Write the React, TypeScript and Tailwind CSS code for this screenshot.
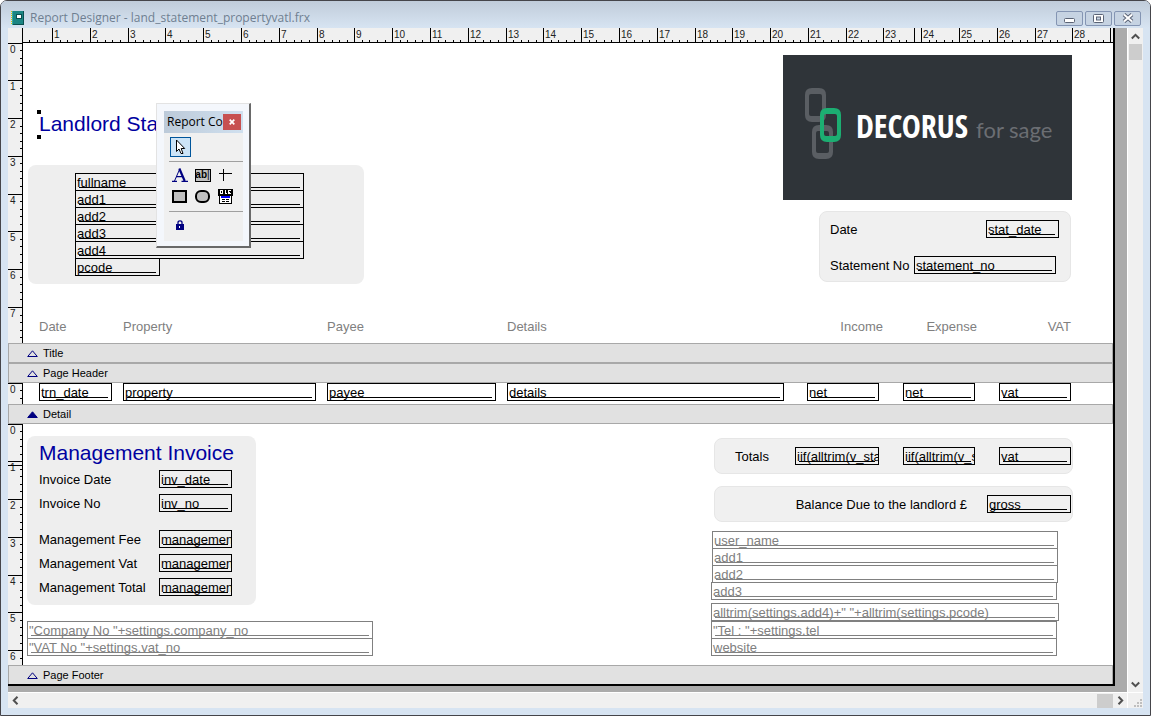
import type { ReactNode } from 'react';

const CM = 37.795;
const STEP = CM / 5;

interface FieldProps {
  children: ReactNode;
  className?: string;
}

function Field({ children, className = '' }: FieldProps) {
  return (
    <div
      className={`relative h-[18px] shrink-0 overflow-hidden border border-current pl-px text-[13px] leading-[18px] whitespace-nowrap ${className}`}
    >
      {children}
      <span className="absolute right-[3px] bottom-[2px] left-[3px] border-b border-current" />
    </div>
  );
}

function HorizontalRuler() {
  // the paper is 29 cm wide
  const ticks = Array.from({ length: 144 }, (_, i) => i + 2);
  return (
    <div className="flex h-[15px] bg-[#f0f0f0]">
      <div className="w-[15px] shrink-0 border-r border-black" />
      <div className="min-w-0 flex-1 border-b border-black">
        <svg className="block h-[14px] w-full" shapeRendering="crispEdges">
          {ticks.map((i) => {
            const x = Math.round(i * STEP - 8.8);
            const major = i % 5 === 0;
            return (
              <g key={i}>
                <rect x={x} y={major ? 0 : 12} width={1} height={major ? 14 : 2} fill="#000" />
                {major && i < 145 && (
                  <text x={x + 2} y={10} fontSize={10} fill="#222">
                    {i / 5}
                  </text>
                )}
              </g>
            );
          })}
          {/* pointer position marker */}
          <rect x={891} y={0} width={1} height={12} fill="#000" />
        </svg>
      </div>
    </div>
  );
}

function VerticalRuler({ height, marker }: { height: number; marker?: number }) {
  const ticks = Array.from({ length: Math.ceil(height / STEP) }, (_, i) => i);
  return (
    <div className="w-[15px] shrink-0 border-r border-black bg-[#f0f0f0]">
      <svg className="block" width={14} height={height} shapeRendering="crispEdges">
        {ticks.map((i) => {
          const y = Math.max(0, Math.round(i * STEP - 0.6));
          const major = i % 5 === 0;
          return (
            <g key={i}>
              <rect x={major ? 0 : 12} y={y} width={major ? 14 : 2} height={1} fill="#000" />
              {major && (
                <text x={2} y={y + 10} fontSize={10} fill="#222">
                  {i / 5}
                </text>
              )}
            </g>
          );
        })}
        {marker && <rect x={0} y={marker} width={14} height={1} fill="#000" />}
      </svg>
    </div>
  );
}

function BandBar({ name, active, last }: { name: string; active?: boolean; last?: boolean }) {
  return (
    <div
      className={`flex items-center gap-[5px] border-[#a8a8a8] bg-[#e1e1e1] pl-[18px] text-[11px] leading-none ${
        last ? 'h-[19px] border-t border-r border-l' : 'h-5 border'
      }`}
    >
      <svg width="11" height="7" viewBox="0 0 11 7">
        <path
          d="M5.5 .8 L10.3 6.5 H.7 Z"
          fill={active ? '#000080' : 'none'}
          stroke="#000080"
          strokeWidth="1"
        />
      </svg>
      <span>{name}</span>
    </div>
  );
}

const link =
  'M7 0H14Q21 0 21 7V27Q21 34 14 34H7Q0 34 0 27V7Q0 0 7 0Z M6 6Q4 6 4 8V26Q4 28 6 28H15Q17 28 17 26V8Q17 6 15 6Z';

function Logo() {
  return (
    <div className="flex h-[145px] w-[289px] items-start bg-[#2f3439] pt-[33px] pl-[22px]">
      <svg width="36" height="71" viewBox="0 0 36 71" fillRule="evenodd">
        <path d={link} fill="#5a5e63" />
        <path d={link} fill="#5a5e63" transform="translate(7 37)" />
        <path d={link} fill="#1cae72" transform="translate(15 20)" />
      </svg>
      <div className="mt-[18px] flex flex-1 items-baseline gap-2 pl-[15px] leading-10 whitespace-nowrap">
        <span className="font-['Liberation_Sans_Narrow','Open_Sans_Condensed','Open_Sans',sans-serif] text-[32px] font-bold text-white">
          DECORUS
        </span>
        <span className="font-['Lato',sans-serif] text-[22px] text-[#6b6e73]">for sage</span>
      </div>
    </div>
  );
}

function ControlsPalette() {
  return (
    <div className="absolute top-[60px] left-[133px] w-[95px] border-t border-r-2 border-b-2 border-l border-t-[#e3e3e3] border-r-[#696969] border-b-[#696969] border-l-[#e3e3e3] bg-[#f4f7fc] pt-[7px] pr-[6px] pb-[5px] pl-[7px]">
      <div className="flex h-[130px] flex-col bg-[#f0f0f0]">
        <div className="flex h-[22px] items-center justify-between bg-linear-to-r from-[#bccad9] to-[#d0e0ef] pr-[3px] pl-[3px]">
          <span className="font-['Open_Sans',sans-serif] text-[12px] whitespace-nowrap text-black">Report Co</span>
          <button
            type="button"
            aria-label="Close toolbar"
            className="flex h-4 w-[18px] shrink-0 items-center justify-center bg-[#c75050]"
          >
            <svg width="6" height="6" viewBox="0 0 6 6">
              <path d="M.7 .7 L5.3 5.3 M5.3 .7 L.7 5.3" stroke="#fff" strokeWidth="1.7" />
            </svg>
          </button>
        </div>

        <div className="py-1 pl-[6px]">
          <button
            type="button"
            aria-label="Select objects"
            className="flex h-5 w-[21px] items-center justify-center border border-[#00559b] bg-[#cce4f7]"
          >
            <svg width="11" height="16" viewBox="0 0 11 16">
              <path
                d="M1.5 1 V12.5 L4 10 L6 14.5 H8 L6.2 9.5 H9.7 Z"
                fill="#fff"
                stroke="#000"
                strokeWidth="1"
              />
            </svg>
          </button>
        </div>

        <div className="ml-[5px] border-t border-[#a0a0a0]" />

        <div className="grid grid-cols-[23px_23px_23px] gap-y-[3px] pt-1 pb-[6px] pl-1">
          <button type="button" aria-label="Label" className="flex h-[18px] items-center justify-center">
            <svg width="16" height="14" viewBox="0 0 16 14" fill="none" stroke="#000080">
              <path d="M2.5 13 L7.5 1.5" strokeWidth="1" />
              <path d="M7.3 .5 L12.7 13" strokeWidth="2.2" />
              <path d="M4 8.7 H10.5 M0 13.3 H5 M9.5 13.3 H16" strokeWidth="1.2" />
            </svg>
          </button>
          <button type="button" aria-label="Field" className="flex h-[18px] items-center justify-center">
            <span className="flex h-[13px] w-4 items-center justify-center border border-black bg-[#c0c0c0] text-[10px] leading-none font-bold">
              ab<span className="font-normal">|</span>
            </span>
          </button>
          <button type="button" aria-label="Line" className="flex h-[18px] items-center justify-center">
            <svg width="13" height="12" viewBox="0 0 13 12" shapeRendering="crispEdges">
              <path d="M0 4.5 H13 M4.5 0 V12" stroke="#000" />
            </svg>
          </button>
          <button type="button" aria-label="Rectangle" className="flex h-[18px] items-center justify-center">
            <svg width="15" height="13" viewBox="0 0 15 13">
              <rect x="1" y="1" width="13" height="11" fill="#c0c0c0" stroke="#000" strokeWidth="2" />
            </svg>
          </button>
          <button type="button" aria-label="Rounded rectangle" className="flex h-[18px] items-center justify-center">
            <svg width="15" height="13" viewBox="0 0 15 13">
              <rect x="1" y="1" width="13" height="11" rx="5" fill="#c0c0c0" stroke="#000" strokeWidth="2" />
            </svg>
          </button>
          <button type="button" aria-label="OLE bound control" className="flex h-[18px] items-center justify-center">
            <svg width="15" height="15" viewBox="0 0 15 15" shapeRendering="crispEdges">
              <rect width="15" height="7" fill="#000" />
              <path
                d="M2.5 1.5 H4.5 V4.5 H2.5 Z M7.5 1 V4.5 H9 M13 1.5 H10.5 V4.5 H13 M10.5 3.5 H12"
                fill="none"
                stroke="#fff"
              />
              <rect x="1.5" y="6.5" width="12" height="8" fill="#fff" stroke="#000" />
              <rect x="3" y="7" width="9" height="2" fill="#0000ff" />
              <path d="M4 10.5 H7 M8 10.5 H11 M4 12.5 H7 M8 12.5 H11" stroke="#000" />
            </svg>
          </button>
        </div>

        <div className="ml-[5px] border-t border-[#a0a0a0]" />

        <div className="flex pt-2 pl-[12px]">
          <button type="button" aria-label="Button lock" className="block">
            <svg width="8" height="10" viewBox="0 0 8 10">
              <path d="M2 5 V2.5 Q2 .8 4 .8 Q6 .8 6 2.5 V5" fill="none" stroke="#000080" strokeWidth="1.3" />
              <rect x="0" y="4" width="8" height="6" fill="#000080" />
              <rect x="3" y="6" width="1" height="2" fill="#fff" />
            </svg>
          </button>
        </div>
      </div>
    </div>
  );
}

function Chevron({ d }: { d: string }) {
  return (
    <svg width="9" height="9" viewBox="0 0 9 9">
      <path d={d} fill="none" stroke="#505050" strokeWidth="2" />
    </svg>
  );
}

function TitleBar() {
  const button =
    'flex h-[15px] w-[27px] items-center justify-center rounded-[2px] border border-[#8495b3] bg-[#c6d3e2]';
  return (
    <header className="flex h-[27px] items-center justify-between rounded-t-[5px] bg-linear-to-b from-[#c0ccda] to-[#d7e4f2] pt-[7px] pr-[9px] pl-[9px]">
      <div className="flex items-center gap-[6px]">
        <svg width="14" height="14" viewBox="0 0 14 14" shapeRendering="crispEdges">
          <rect x="2" y="0" width="12" height="14" fill="#0b4f50" />
          <rect x="2" y="0" width="11" height="13" fill="#1b8583" />
          <rect x="2" y="0" width="1" height="14" fill="#35a9a4" />
          <rect x="6" y="3" width="5" height="4" fill="#fff" stroke="#0b4f50" />
          <path d="M1.5 0 V14" stroke="#d8c800" strokeWidth="1" strokeDasharray="1 1" />
        </svg>
        <h1 className="font-['Open_Sans',sans-serif] text-[12px] leading-4 text-[#6f7f91]">
          Report Designer - land_statement_propertyvatl.frx
        </h1>
      </div>
      <div className="flex gap-[2px]">
        <button type="button" aria-label="Minimize" className={button}>
          <svg width="13" height="9" viewBox="0 0 13 9">
            <rect x="1.5" y="4.5" width="10" height="4" rx="1" fill="#fff" stroke="#5a6375" />
          </svg>
        </button>
        <button type="button" aria-label="Maximize" className={button}>
          <svg width="11" height="9" viewBox="0 0 11 9">
            <rect x=".5" y=".5" width="10" height="8" rx="1" fill="#fff" stroke="#5a6375" />
            <rect x="3.5" y="3" width="4" height="3" fill="#c6d3e2" stroke="#5a6375" />
          </svg>
        </button>
        <button type="button" aria-label="Close" className={button}>
          <svg width="12" height="10" viewBox="0 0 12 10">
            <path d="M2 1.5 L10 8.5 M10 1.5 L2 8.5" stroke="#5a6375" strokeWidth="4" />
            <path d="M2 1.5 L10 8.5 M10 1.5 L2 8.5" stroke="#fff" strokeWidth="2" />
          </svg>
        </button>
      </div>
    </header>
  );
}

const columns = 'grid grid-cols-[84px_204px_180px_1fr_96px_96px_72px] pr-[42px] pl-4';

function TitleBand() {
  return (
    <section className="flex">
      <VerticalRuler height={300} />
      <div className="relative min-w-0 flex-1">
        <div className="flex justify-between pr-[41px] pl-[5px]">
          <div className="pt-[69px]">
            <div className="relative ml-[11px] h-6 w-[117px]">
              <h2 className="text-[21px] leading-6 whitespace-nowrap text-[#0000a0]">Landlord Sta</h2>
              <span className="absolute -top-[2px] -left-[2px] size-1 bg-black" />
              <span className="absolute -bottom-[3px] -left-[2px] size-1 bg-black" />
            </div>
            <div className="mt-[29px] w-[336px] rounded-[8px] bg-[#eeeeee] px-[47px] py-2">
              <Field className="w-[229px]">fullname</Field>
              <Field className="-mt-px w-[229px]">add1</Field>
              <Field className="-mt-px w-[229px]">add2</Field>
              <Field className="-mt-px w-[229px]">add3</Field>
              <Field className="-mt-px w-[229px]">add4</Field>
              <Field className="-mt-px w-[85px]">pcode</Field>
            </div>
          </div>
          <div className="flex flex-col items-end pt-3">
            <Logo />
            <div className="mt-[11px] mr-px flex w-[252px] flex-col gap-[18px] rounded-[8px] border border-[#e6e6e6] bg-[#f0f0f0] pt-2 pr-[11px] pb-[7px] pl-[10px] text-[13px] leading-5">
              <div className="flex h-[18px] justify-between">
                <span>Date</span>
                <Field className="w-[73px]">stat_date</Field>
              </div>
              <div className="flex h-[18px] justify-between">
                <span>Statement No</span>
                <Field className="mr-[3px] w-[142px]">statement_no</Field>
              </div>
            </div>
          </div>
        </div>

        <div className={`${columns} pt-[35px] pb-2 text-[13px] leading-4 text-[#808080]`}>
          <span>Date</span>
          <span>Property</span>
          <span>Payee</span>
          <span>Details</span>
          <span className="pr-5 text-right">Income</span>
          <span className="pr-[22px] text-right">Expense</span>
          <span className="text-right">VAT</span>
        </div>

        <ControlsPalette />
      </div>
    </section>
  );
}

function DetailBand() {
  return (
    <section className="flex h-[21px]">
      <VerticalRuler height={21} />
      <div className={`${columns} min-w-0 flex-1`}>
        <Field className="mr-[11px]">trn_date</Field>
        <Field className="mr-[11px]">property</Field>
        <Field className="mr-[11px]">payee</Field>
        <Field className="mr-[23px]">details</Field>
        <Field className="mr-6">net</Field>
        <Field className="mr-6">net</Field>
        <Field>vat</Field>
      </div>
    </section>
  );
}

function InvoiceLine({ label, field }: { label: string; field: string }) {
  return (
    <div className="flex h-[18px] justify-between leading-5">
      <span>{label}</span>
      <Field className="w-[73px]">{field}</Field>
    </div>
  );
}

function FooterBand() {
  return (
    <section className="flex">
      <VerticalRuler height={241} marker={41} />
      <div className="flex min-w-0 flex-1 justify-between pr-10 pl-1 text-[13px] leading-[18px]">
        <div className="pt-3">
          <div className="flex h-[169px] w-[229px] flex-col gap-1 rounded-[8px] bg-[#eeeeee] pt-1 pr-6 pl-3">
            <h2 className="text-[21px] leading-[26px] whitespace-nowrap text-[#0000a0]">Management Invoice</h2>
            <div className="flex flex-col gap-[6px]">
              <InvoiceLine label="Invoice Date" field="inv_date" />
              <InvoiceLine label="Invoice No" field="inv_no" />
            </div>
            <div className="flex flex-col gap-[6px] pt-[14px]">
              <InvoiceLine label="Management Fee" field="managemen" />
              <InvoiceLine label="Management Vat" field="managemen" />
              <InvoiceLine label="Management Total" field="managemen" />
            </div>
          </div>
          <div className="mt-4 w-[346px] text-[#808080]">
            <Field>"Company No "+settings.company_no</Field>
            <Field className="-mt-px">"VAT No "+settings.vat_no</Field>
          </div>
        </div>

        <div className="w-[362px] pt-[14px]">
          <div className="ml-[3px] flex h-9 items-center rounded-[8px] border border-[#e6e6e6] bg-[#f0f0f0] pr-px pl-5">
            <span className="h-[18px] flex-1 leading-5">Totals</span>
            <Field className="mr-6 w-[84px]">iif(alltrim(v_sta</Field>
            <Field className="mr-6 w-[72px]">iif(alltrim(v_s</Field>
            <Field className="w-[72px]">vat</Field>
          </div>
          <div className="mt-3 ml-[3px] flex h-9 items-center justify-end gap-5 rounded-[8px] border border-[#e6e6e6] bg-[#f0f0f0] pr-px">
            <span className="h-[18px] leading-5">Balance Due to the landlord £</span>
            <Field className="w-[84px]">gross</Field>
          </div>
          <div className="mt-[9px] text-[#808080]">
            <div className="ml-px w-[346px]">
              <Field>user_name</Field>
              <Field className="-mt-px">add1</Field>
              <Field className="-mt-px">add2</Field>
            </div>
            <Field className="-mt-px w-[346px]">add3</Field>
            <Field className="mt-[3px] w-[348px]">alltrim(settings.add4)+" "+alltrim(settings.pcode)</Field>
            <Field className="w-[346px]">"Tel : "+settings.tel</Field>
            <Field className="-mt-px w-[346px]">website</Field>
          </div>
        </div>
      </div>
    </section>
  );
}

export default function App() {
  return (
    <div className="flex min-h-screen flex-col rounded-t-[7px] border border-[#45454a] bg-[#d7e4f2] font-['Liberation_Sans',Arial,sans-serif] text-black">
      <TitleBar />
      <main className="mx-[7px] mb-[7px] flex flex-1 flex-col">
        <div className="flex flex-1">
          <div className="min-w-0 flex-1 bg-[#ababab] pr-3 pb-[6px]">
            <div className="border-r-2 border-b-2 border-black bg-white">
              <HorizontalRuler />
              <TitleBand />
              <BandBar name="Title" />
              <BandBar name="Page Header" />
              <DetailBand />
              <BandBar name="Detail" active />
              <FooterBand />
              <BandBar name="Page Footer" last />
            </div>
          </div>
          <div className="flex w-4 flex-col border-l border-white bg-[#f0f0f0]">
            <button type="button" aria-label="Scroll up" className="flex h-4 items-center justify-center">
              <Chevron d="M.8 6.5 L4.5 2.8 L8.2 6.5" />
            </button>
            <div className="mx-px h-4 bg-[#cdcdcd]" />
            <button type="button" aria-label="Scroll down" className="mt-auto flex h-4 items-center justify-center">
              <Chevron d="M.8 2.5 L4.5 6.2 L8.2 2.5" />
            </button>
          </div>
        </div>
        <div className="flex h-4 items-center border-t border-white bg-[#f0f0f0]">
          <button type="button" aria-label="Scroll left" className="flex w-[14px] items-center justify-center">
            <Chevron d="M6.5 .8 L2.8 4.5 L6.5 8.2" />
          </button>
          <div className="ml-auto h-[14px] w-4 bg-[#cdcdcd]" />
          <button type="button" aria-label="Scroll right" className="flex w-[14px] items-center justify-center">
            <Chevron d="M2.5 .8 L6.2 4.5 L2.5 8.2" />
          </button>
          <div className="flex h-full w-4 items-end justify-end border-l border-white pr-px pb-px">
            <svg width="8" height="8" viewBox="0 0 8 8" fill="#bfbfbf" shapeRendering="crispEdges">
              <path d="M6 0h2v2h-2z M3 3h2v2h-2z M6 3h2v2h-2z M0 6h2v2h-2z M3 6h2v2h-2z M6 6h2v2h-2z" />
            </svg>
          </div>
        </div>
      </main>
    </div>
  );
}
